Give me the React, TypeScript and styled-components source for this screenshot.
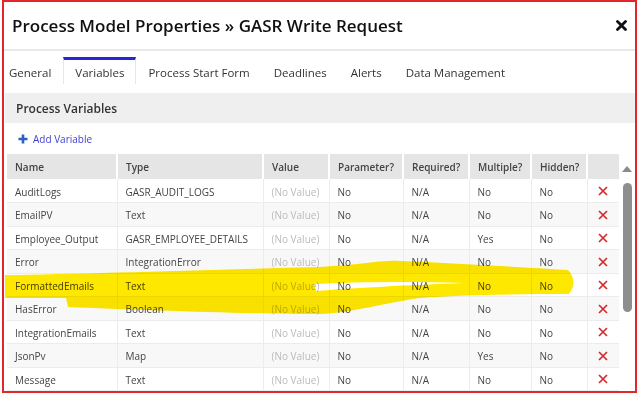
import React from 'react';
import styled, { createGlobalStyle } from 'styled-components';

const GlobalStyle = createGlobalStyle`
  html, body {
    margin: 0;
    padding: 0;
    background: #fff;
  }
  body {
    font-family: 'Open Sans', 'Liberation Sans', sans-serif;
    color: #444;
  }
`;

const Page = styled.div`
  padding-left: 2px;
`;

const Frame = styled.div`
  position: relative;
  box-sizing: border-box;
  width: 635px;
  height: 393px;
  border: 2px solid #e3262b;
  overflow: hidden;
  background: #fff;
`;

const TitleBar = styled.div`
  display: flex;
  align-items: center;
  justify-content: space-between;
  height: 46px;
  padding: 0 8px 1px 8px;
`;

const Title = styled.h1`
  margin: 0;
  font-size: 17px;
  font-weight: 600;
  color: #111;
`;

const Divider = styled.div`
  height: 2px;
  background: #e8e8e8;
`;

const TabRow = styled.ul`
  display: flex;
  align-items: flex-end;
  height: 33px;
  margin: 0;
  padding: 0 0 0 5px;
  list-style: none;
`;

const Tab = styled.li<{ $active?: boolean }>`
  box-sizing: border-box;
  display: flex;
  align-items: center;
  height: 27px;
  padding: ${(p) => (p.$active ? '0 11px' : '0 12px')};
  border-top: 3px solid ${(p) => (p.$active ? '#2626d4' : 'transparent')};
  border-left: ${(p) => (p.$active ? '1px solid #e6e6e6' : 'none')};
  border-right: ${(p) => (p.$active ? '1px solid #e6e6e6' : 'none')};
  font-size: 11.5px;
  color: #333;
  &:first-child {
    padding-left: 0;
  }
`;

const Body = styled.div`
  padding-top: 9px;
`;

const SectionHeader = styled.div`
  display: flex;
  align-items: center;
  height: 30px;
  margin-left: 1px;
  padding-left: 11px;
  background: #efefef;
  font-size: 12px;
  font-weight: 600;
  color: #333;
`;

const AddRow = styled.div`
  display: flex;
  align-items: center;
  gap: 5px;
  height: 31px;
  padding-left: 14px;
  font-size: 10px;
  color: #4040d0;
`;

const TableArea = styled.div`
  display: flex;
  padding-left: 3px;
`;

const Table = styled.table`
  width: 612px;
  border-collapse: collapse;
  table-layout: fixed;
  font-size: 10px;
`;

const HeadCell = styled.th`
  height: 25px;
  padding: 0 0 0 8px;
  background: #e5e5e5;
  border-right: 2px solid #fff;
  text-align: left;
  font-weight: 600;
  color: #444;
  &:last-child {
    border-right: none;
  }
`;

const Row = styled.tr<{ $odd: boolean }>`
  height: 23.5px;
  background: ${(p) => (p.$odd ? '#f8f8f8' : '#fff')};
  border-bottom: 1px solid #ececec;
`;

const Cell = styled.td<{ $muted?: boolean }>`
  padding: 2px 0 0 8px;
  border-right: 1px solid #ececec;
  color: ${(p) => (p.$muted ? '#bbb' : '#444')};
  white-space: nowrap;
  overflow: hidden;
`;

const DeleteCell = styled.td`
  padding-top: 2px;
  text-align: center;
  line-height: 0;
`;

const ScrollCol = styled.div`
  display: flex;
  flex-direction: column;
  align-items: center;
  width: 17px;
`;

const ArrowUp = styled.div`
  margin-top: 12px;
  width: 0;
  height: 0;
  border-left: 5px solid transparent;
  border-right: 5px solid transparent;
  border-bottom: 6px solid #8a8a8a;
`;

const Thumb = styled.div`
  margin-top: 11px;
  margin-left: 1px;
  width: 9px;
  height: 129px;
  border-radius: 5px;
  background: #8e8e8e;
`;

const Highlight = styled.svg`
  position: absolute;
  top: -2px;
  left: -4px;
  width: 640px;
  height: 394px;
  pointer-events: none;
  mix-blend-mode: multiply;
`;

const CloseIcon = () => (
  <svg width="11" height="11" viewBox="0 0 11 11">
    <path d="M1.5 1.5 L9.5 9.5 M9.5 1.5 L1.5 9.5" stroke="#111" strokeWidth="2.8" strokeLinecap="round" />
  </svg>
);

const PlusIcon = () => (
  <svg width="10" height="10" viewBox="0 0 10 10">
    <path d="M5 0.5 V9.5 M0.5 5 H9.5" stroke="#2d5fc4" strokeWidth="2.6" />
  </svg>
);

const DeleteIcon = () => (
  <svg width="10" height="10" viewBox="0 0 10 10">
    <path d="M1 1 L9 9 M9 1 L1 9" stroke="#d42a2a" strokeWidth="1.7" />
  </svg>
);

const tabs = ['General', 'Variables', 'Process Start Form', 'Deadlines', 'Alerts', 'Data Management'];

const columns = [
  { label: 'Name', width: 110 },
  { label: 'Type', width: 146 },
  { label: 'Value', width: 66 },
  { label: 'Parameter?', width: 74 },
  { label: 'Required?', width: 66 },
  { label: 'Multiple?', width: 62 },
  { label: 'Hidden?', width: 56 },
  { label: '', width: 32 },
];

const variables = [
  ['AuditLogs', 'GASR_AUDIT_LOGS', 'No', 'N/A', 'No', 'No'],
  ['EmailPV', 'Text', 'No', 'N/A', 'No', 'No'],
  ['Employee_Output', 'GASR_EMPLOYEE_DETAILS', 'No', 'N/A', 'Yes', 'No'],
  ['Error', 'IntegrationError', 'No', 'N/A', 'No', 'No'],
  ['FormattedEmails', 'Text', 'No', 'N/A', 'No', 'No'],
  ['HasError', 'Boolean', 'No', 'N/A', 'No', 'No'],
  ['IntegrationEmails', 'Text', 'No', 'N/A', 'No', 'No'],
  ['JsonPv', 'Map', 'No', 'N/A', 'Yes', 'No'],
  ['Message', 'Text', 'No', 'N/A', 'No', 'No'],
];

const App: React.FC = () => {
  return (
    <>
      <GlobalStyle />
      <Page>
        <Frame>
          <TitleBar>
            <Title>Process Model Properties » GASR Write Request</Title>
            <CloseIcon />
          </TitleBar>
          <Divider />
          <TabRow>
            {tabs.map((t) => (
              <Tab key={t} $active={t === 'Variables'}>
                {t}
              </Tab>
            ))}
          </TabRow>
          <Body>
            <SectionHeader>Process Variables</SectionHeader>
            <AddRow>
              <PlusIcon />
              Add Variable
            </AddRow>
            <TableArea>
              <Table>
                <colgroup>
                  {columns.map((c, i) => (
                    <col key={i} style={{ width: c.width }} />
                  ))}
                </colgroup>
                <thead>
                  <tr>
                    {columns.map((c, i) => (
                      <HeadCell key={i}>{c.label}</HeadCell>
                    ))}
                  </tr>
                </thead>
                <tbody>
                  {variables.map((v, i) => (
                    <Row key={v[0]} $odd={i % 2 === 1}>
                      <Cell>{v[0]}</Cell>
                      <Cell>{v[1]}</Cell>
                      <Cell $muted>(No Value)</Cell>
                      <Cell>{v[2]}</Cell>
                      <Cell>{v[3]}</Cell>
                      <Cell>{v[4]}</Cell>
                      <Cell>{v[5]}</Cell>
                      <DeleteCell>
                        <DeleteIcon />
                      </DeleteCell>
                    </Row>
                  ))}
                </tbody>
              </Table>
              <ScrollCol>
                <ArrowUp />
                <Thumb />
              </ScrollCol>
            </TableArea>
          </Body>
          <Highlight viewBox="0 0 640 394">
            <path
              fill="#ffe800"
              d="M5,275 C80,274 200,270 320,267 C360,265 380,260 400,261 C450,263 520,267 568,270 C575,277 575,287 569,294 C520,294 460,295 420,298 C390,302 350,313 320,314 C250,314 140,310 68,307 L66,298 C45,298 20,298 5,298 Z"
            />
            <path fill="#ffffff" d="M314,284 C350,282 410,281 464,283 C410,285 350,288 316,291 Z" />
          </Highlight>
        </Frame>
      </Page>
    </>
  );
};

export default App;
